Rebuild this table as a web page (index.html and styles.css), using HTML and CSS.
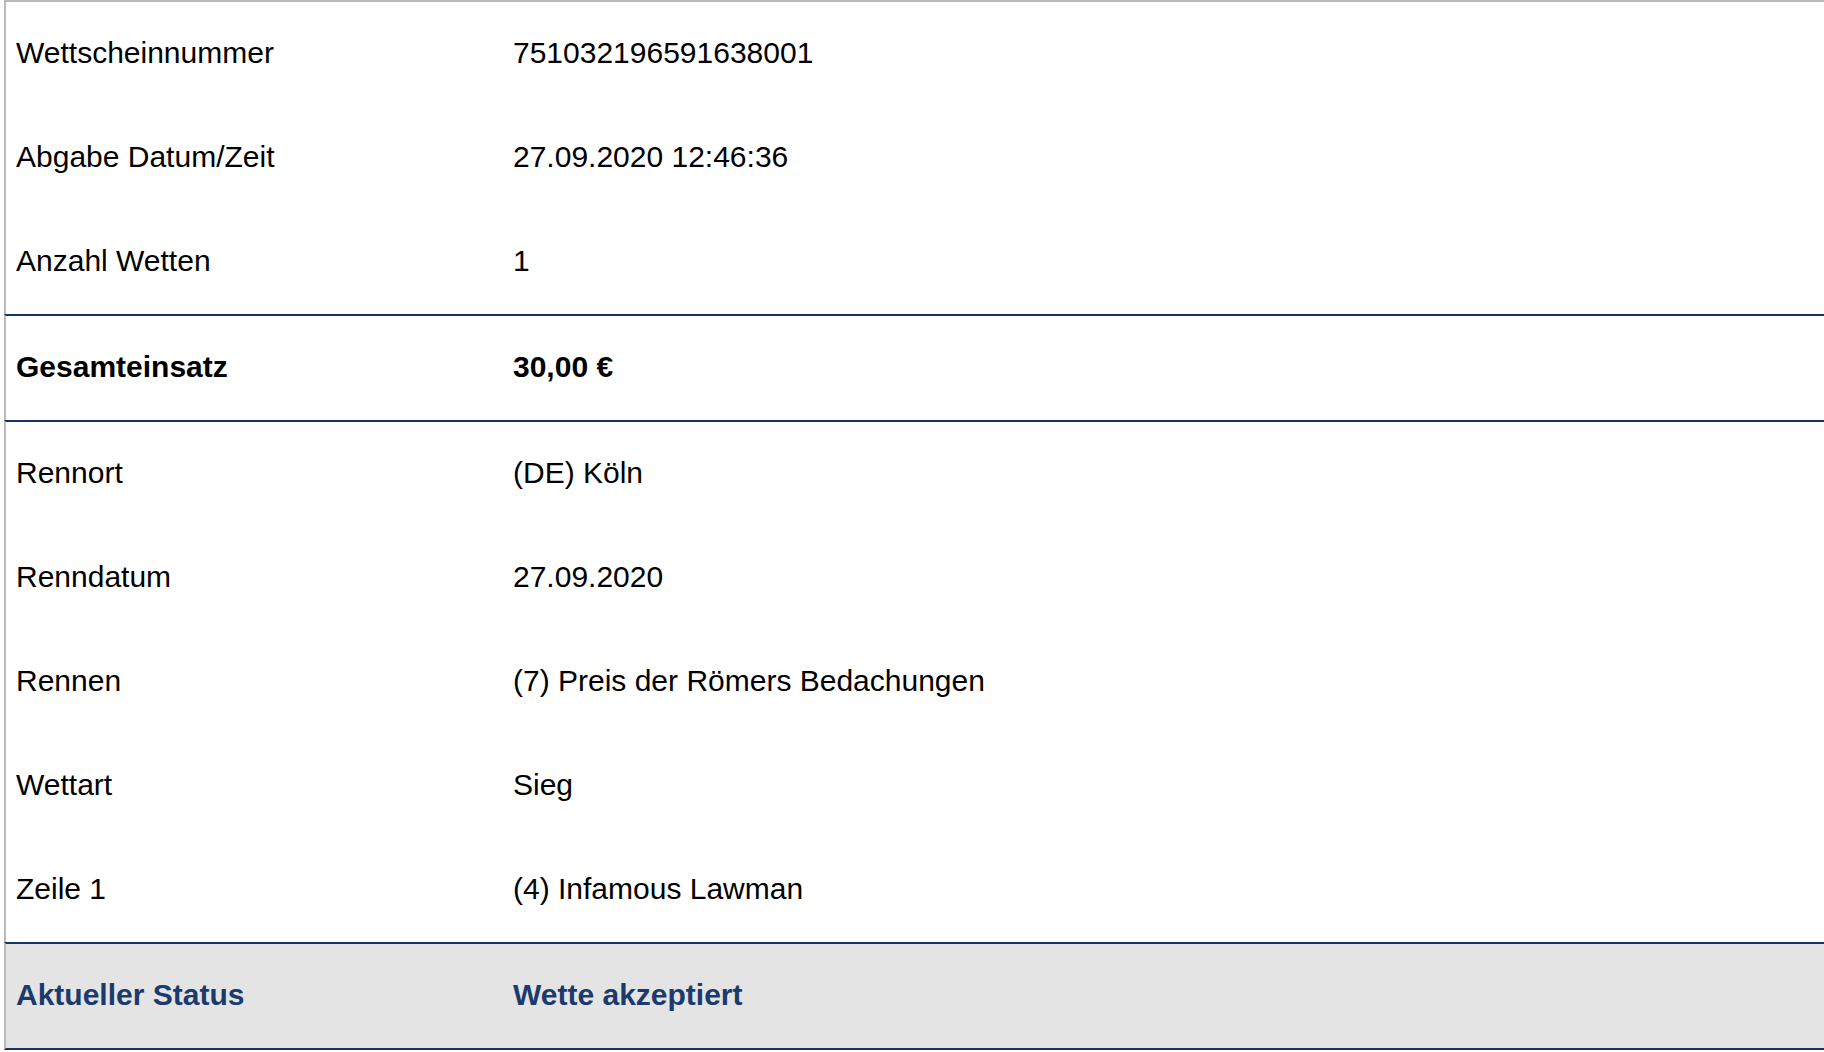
FILE: index.html
```html
<!DOCTYPE html>
<html lang="de">
<head>
    <meta charset="UTF-8">
    <title>Wettschein</title>
    <link rel="stylesheet" href="styles.css">
</head>
<body>
    <!-- Wettschein Details -->
    <div class="ticket">
        <div class="row">
            <div class="label">Wettscheinnummer</div>
            <div class="value">751032196591638001</div>
        </div>
        <div class="row">
            <div class="label">Abgabe Datum/Zeit</div>
            <div class="value">27.09.2020 12:46:36</div>
        </div>
        <div class="row">
            <div class="label">Anzahl Wetten</div>
            <div class="value">1</div>
        </div>
        <div class="row sep total">
            <div class="label">Gesamteinsatz</div>
            <div class="value">30,00 €</div>
        </div>
        <div class="row sep">
            <div class="label">Rennort</div>
            <div class="value">(DE) Köln</div>
        </div>
        <div class="row">
            <div class="label">Renndatum</div>
            <div class="value">27.09.2020</div>
        </div>
        <div class="row">
            <div class="label">Rennen</div>
            <div class="value">(7) Preis der Römers Bedachungen</div>
        </div>
        <div class="row">
            <div class="label">Wettart</div>
            <div class="value">Sieg</div>
        </div>
        <div class="row">
            <div class="label">Zeile 1</div>
            <div class="value">(4) Infamous Lawman</div>
        </div>
        <div class="row sep status">
            <div class="label">Aktueller Status</div>
            <div class="value">Wette akzeptiert</div>
        </div>
    </div>
</body>
</html>
```

FILE: styles.css
```css
body { margin: 0; font-family: "Liberation Sans", Arial, sans-serif; font-size: 30px; color: #000; background: #fff; }
.ticket { margin-left: 4px; border-top: 2px solid #bababa; }
.row { display: grid; grid-template-columns: 497px 1fr; align-items: center; height: 104px; border-left: 2px solid #bababa; }
.label, .value { padding: 0 10px 2px; white-space: nowrap; }
.sep { border-top: 2px solid #15326a; }
.total { font-weight: bold; }
.status { font-weight: bold; color: #1b3a6e; background-color: #e4e4e4; border-bottom: 2px solid #15326a; }
```
